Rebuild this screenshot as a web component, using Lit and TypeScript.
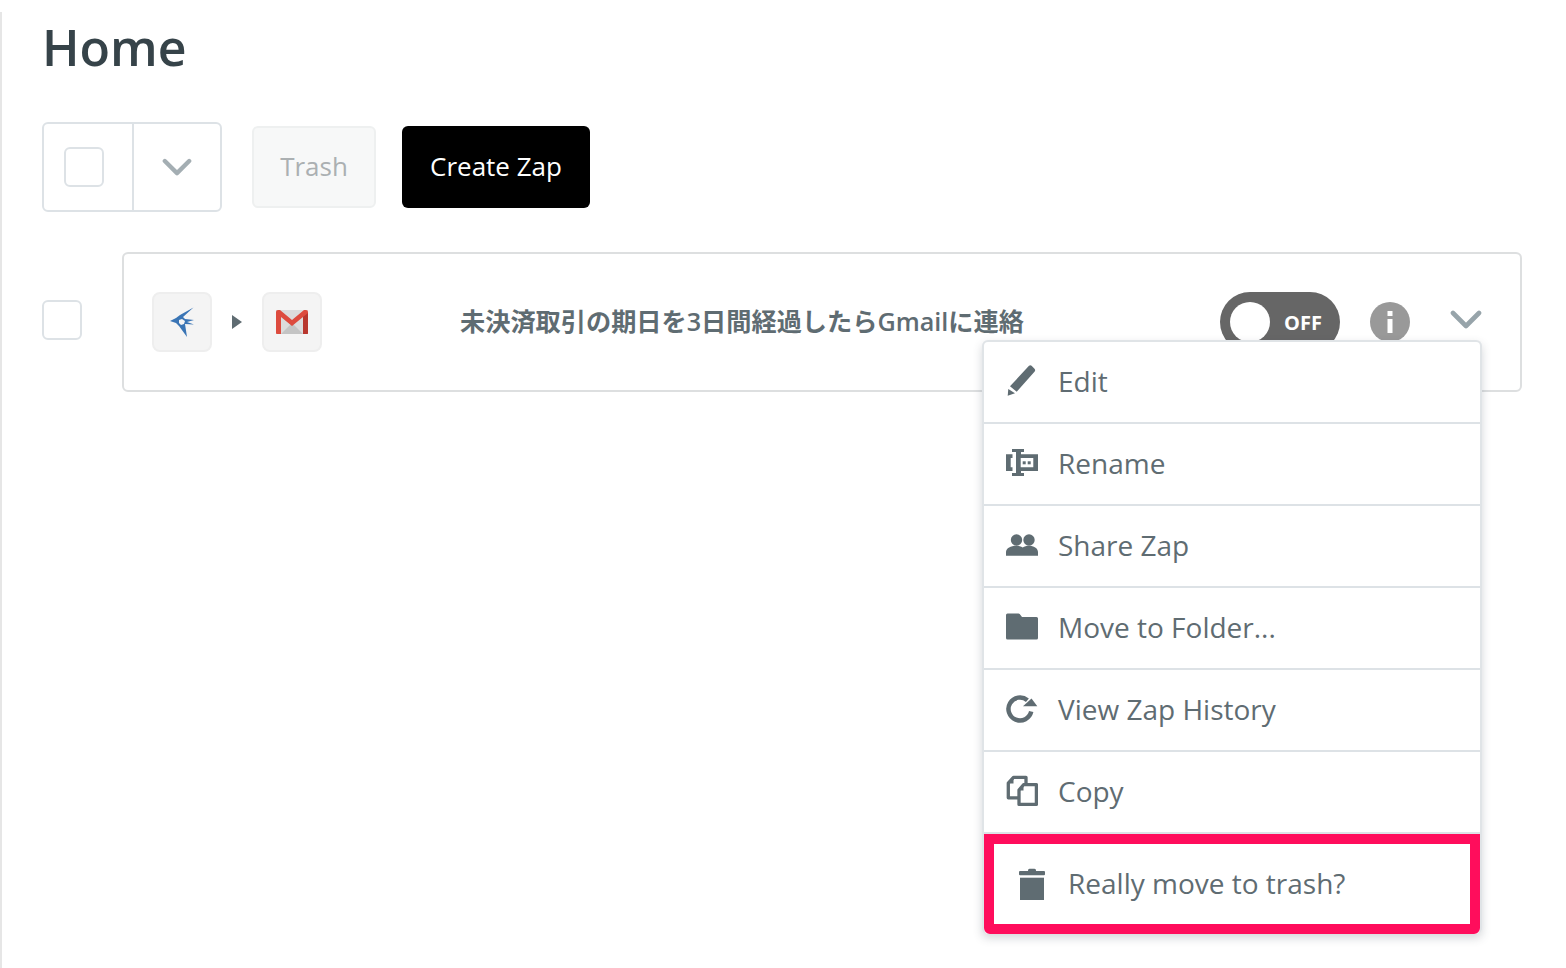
import { LitElement, html, css, svg } from "lit";
import { customElement } from "lit/decorators.js";

const chevron = (w: number, h: number, c: string) => html`<svg width=${w} height=${h} viewBox="0 0 32 20" style="display:block"><path d="M3 3 L16 16 L29 3" fill="none" stroke=${c} stroke-width="4.6" stroke-linecap="round" stroke-linejoin="round"/></svg>`;

const icons: Record<string, unknown> = {
  edit: svg`<path d="M23 .8 a2 2 0 0 1 2.600 0 L28.500 3.800 a2 2 0 0 1 .2 2.600 L10.700 26.700 L4 21.300Z"/><path d="M2.300 24 L9 28.300 L1.700 30.700Z"/>`,
  rename: svg`<path fill-rule="evenodd" d="M6 2h12v3h-3v2.300H32V24H15v2h3v3H6v-3h4V5H6Z M14.700 11v9.300H27.300V11Z"/><path d="M0 7.300h6.500V11H4.700v9.300h1.800V24H0Z"/><rect x="16.700" y="14.300" width="3" height="3"/><rect x="21.700" y="14.300" width="3" height="3"/>`,
  share: svg`<circle cx="10.500" cy="11" r="5.700"/><circle cx="23" cy="11" r="5.700"/><path d="M0 26.700v-3.700c0-4 5-6.300 10-6.300 2.800 0 5 .6 6.700 1.700 1.700-1.100 3.900-1.700 6.300-1.700 4.500 0 9 2.300 9 6.300v3.700H0Z"/>`,
  folder: svg`<path d="M1.500 2.500h11a1.500 1.500 0 0 1 1.200.6L16 6h14.500A1.500 1.500 0 0 1 32 7.500V27a1.500 1.500 0 0 1-1.500 1.500h-29A1.500 1.500 0 0 1 0 27V4A1.500 1.500 0 0 1 1.500 2.500Z"/>`,
  history: svg`<path d="M21.400 7.200 A11.500 11.500 0 1 0 25.200 18.500" fill="none" stroke="currentColor" stroke-width="4.500"/><path d="M17 13.300 L31.300 13.300 L25.500 5.500Z"/>`,
  copy: svg`<g stroke="currentColor" stroke-width="3.300" stroke-linejoin="round"><path fill="#fff" d="M7.500 2.300H20V22.800H2.300V8Z"/><path fill="#fff" d="M17.500 9.700H30.400V29.400H13V15Z"/></g><path d="M7.500 3v5.500H3Z M17.500 10.500v5h-4Z"/>`,
  trash: svg`<rect x="0" y="3" width="26" height="4.300" rx="1"/><rect x="9" y="0.800" width="8" height="4" rx="1.500"/><rect x="1" y="9.700" width="24" height="22.300"/>`,
};

const items: [string, string][] = [
  ["edit", "Edit"],
  ["rename", "Rename"],
  ["share", "Share Zap"],
  ["folder", "Move to Folder..."],
  ["history", "View Zap History"],
  ["copy", "Copy"],
];

@customElement("app-root")
export class AppRoot extends LitElement {
  static styles = css`
    :host { display: block; height: 968px; overflow: hidden; background: #fff; font-family: "Open Sans", "Noto Sans", sans-serif; color: #5f6c72; }
    .page { margin-top: 12px; height: 956px; box-sizing: border-box; border-left: 2px solid #e6e6e6; padding: 0 44px 0 40px; }
    h1 { margin: 0; font-size: 50px; line-height: 70px; font-weight: 600; color: #364349; }
    .toolbar { display: flex; align-items: center; margin-top: 40px; height: 90px; }
    .group { display: flex; width: 180px; height: 90px; box-sizing: border-box; border: 2px solid #dde2e6; border-radius: 6px; }
    .group-check { width: 90px; border-right: 2px solid #dde2e6; display: flex; align-items: center; padding-left: 20px; box-sizing: border-box; }
    .group-arrow { flex: 1; display: flex; align-items: center; justify-content: center; }
    .check { width: 40px; height: 40px; box-sizing: border-box; border: 2px solid #dde2e6; border-radius: 6px; background: #fff; flex: none; }
    .row > .check { margin-top: -4px; }
    .btn { height: 82px; box-sizing: border-box; display: flex; align-items: center; justify-content: center; border-radius: 6px; font-size: 26px; padding-bottom: 2px; }
    .trash { width: 124px; margin-left: 30px; background: #f7f8f8; border: 2px solid #eef0f0; color: #abb0b2; }
    .create { width: 188px; margin-left: 26px; background: #000; color: #fff; }
    .row { display: flex; align-items: center; margin-top: 40px; gap: 40px; }
    .card { position: relative; flex: 1; height: 140px; box-sizing: border-box; border: 2px solid #dddfe0; border-radius: 6px; display: flex; align-items: center; padding: 0 0 0 28px; }
    .app { width: 60px; height: 60px; box-sizing: border-box; background: #f4f4f4; border: 2px solid #eeeeee; border-radius: 8px; display: flex; align-items: center; justify-content: center; flex: none; }
    .app svg { display: block; }
    .play { width: 10px; height: 14px; margin: 0 20px; flex: none; display: block; fill: #5f6c72; }
    .title { margin-left: 138px; font-family: "Open Sans", "Noto Sans CJK JP", sans-serif; font-size: 25.2px; font-weight: 600; white-space: nowrap; width: 760px; padding-bottom: 4px; }
    .toggle { width: 120px; height: 60px; border-radius: 30px; background: #666; flex: none; display: flex; align-items: center; padding-left: 10px; box-sizing: border-box; color: #fff; font-weight: 700; font-size: 20px; }
    .knob { width: 40px; height: 40px; border-radius: 50%; background: #fff; margin-right: 14px; flex: none; }
    .info { margin-left: 30px; width: 40px; height: 40px; border-radius: 50%; background: #999; flex: none; display: flex; align-items: center; justify-content: center; }
    .more { margin-left: 40px; flex: none; margin-top: -4px; }
    .menu { position: absolute; top: 86px; right: 38px; width: 500px; box-sizing: border-box; border: 2px solid #e0e4e7; border-bottom: none; border-radius: 6px; background: #fff; box-shadow: 0 4px 10px rgba(60, 70, 80, .22); }
    .item { height: 82px; box-sizing: border-box; border-bottom: 2px solid #dde2e6; display: flex; align-items: center; padding: 0 0 2px 22px; gap: 20px; font-size: 28px; }
    .item svg { width: 32px; height: 32px; fill: currentColor; flex: none; display: block; }
    .confirm { height: 100px; box-sizing: border-box; border: 10px solid #ff0d5c; border-radius: 0 0 6px 6px; display: flex; align-items: center; padding: 0 0 2px 25px; gap: 23px; font-size: 28px; }
    .confirm svg { width: 26px; height: 32px; fill: currentColor; display: block; flex: none; margin-top: 2px; }
  `;

  render() {
    return html`<div class="page">
      <h1>Home</h1>
      <div class="toolbar">
        <div class="group">
          <div class="group-check"><div class="check"></div></div>
          <div class="group-arrow">${chevron(30, 19, "#a4aeb3")}</div>
        </div>
        <div class="btn trash">Trash</div>
        <div class="btn create">Create Zap</div>
      </div>
      <div class="row">
        <div class="check"></div>
        <div class="card">
          <div class="app">
            <svg width="32" height="32" viewBox="-16 -16 32 32">
              <path fill="#3a75b5" d="M-12-1 L-6-4 L-2-7 L11.500-14.500 L1-5 L3-3 L12-2 L5 0 L12 2.500 L3 2 L5 15 L-3 4 L-6 1Z"/>
              <path fill="#f4f4f4" d="M-3-2 L0-3 L3-1 L2 2 L-1 3 L-3 1Z"/>
            </svg>
          </div>
          <svg class="play" viewBox="0 0 10 14"><path d="M0 0 L10 7 L0 14Z"/></svg>
          <div class="app">
            <svg width="32" height="24" viewBox="0 0 32 24">
              <rect width="32" height="24" fill="#dcdcdc"/>
              <path d="M5 24 L16 13 L27 24Z" fill="#c4c4c4"/>
              <path d="M0 2 a2 2 0 0 1 2-2 h2 L16 10 L28 0 h2 a2 2 0 0 1 2 2 V23 a1 1 0 0 1-1 1 H27 V7 L16 16 L5 7 V24 H1 a1 1 0 0 1-1-1Z" fill="#dd4b3e"/>
              <path d="M27 7 L32 3 V23 a1 1 0 0 1-1 1 H27Z" fill="#b8372e"/>
            </svg>
          </div>
          <div class="title">未決済取引の期日を3日間経過したらGmailに連絡</div>
          <div class="toggle"><div class="knob"></div>OFF</div>
          <div class="info">
            <svg width="6" height="22" viewBox="0 0 6 22" style="display:block"><rect x="0.500" y="0" width="5" height="5" fill="#fff"/><rect x="0.500" y="8" width="5" height="14" fill="#fff"/></svg>
          </div>
          <div class="more">${chevron(32, 20, "#97a4aa")}</div>
          <div class="menu">
            ${items.map(([i, t]) => html`<div class="item"><svg viewBox="0 0 32 32">${icons[i]}</svg><span>${t}</span></div>`)}
            <div class="confirm"><svg viewBox="0 0 26 32">${icons.trash}</svg><span>Really move to trash?</span></div>
          </div>
        </div>
      </div>
    </div>`;
  }
}
